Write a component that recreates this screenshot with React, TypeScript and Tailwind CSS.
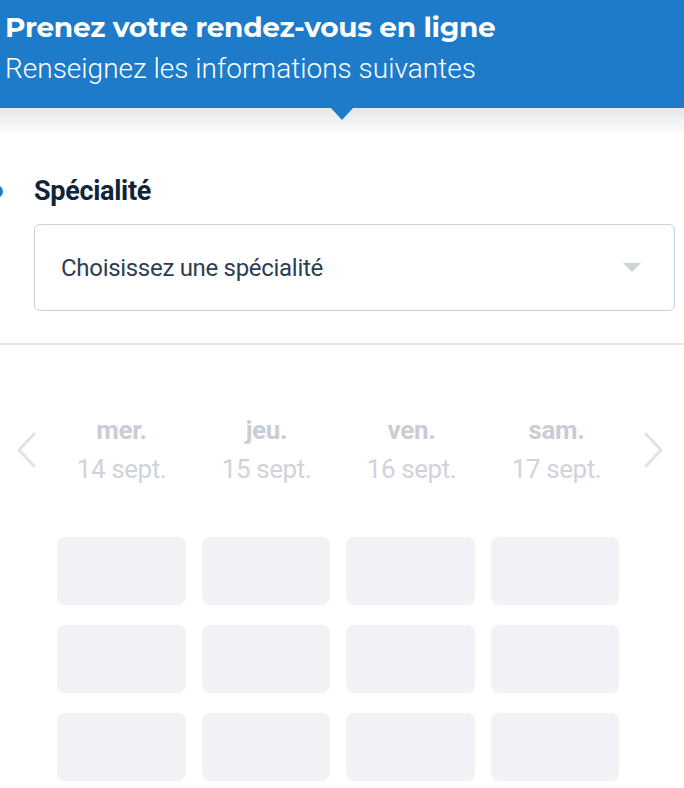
const days = [
  { day: "mer.", date: "14 sept." },
  { day: "jeu.", date: "15 sept." },
  { day: "ven.", date: "16 sept." },
  { day: "sam.", date: "17 sept." },
]

const App = () => {
  return (
    <div className="w-[684px] h-[788px] overflow-hidden bg-white font-['Roboto',sans-serif]">
      {/* bandeau */}
      <div className="relative h-[108px] bg-[#1e7bc9] pl-[5px] pt-[11px] text-white">
        <h1 className="font-['Montserrat','Open_Sans',sans-serif] text-[28px] font-bold leading-[32px] tracking-[-0.3px]">
          Prenez votre rendez-vous en ligne
        </h1>
        <p className="mt-[10px] text-[28px] font-light leading-[32px]">Renseignez les informations suivantes</p>
        <div className="absolute left-[330px] top-[107px] z-10 h-0 w-0 border-x-[12px] border-t-[13px] border-x-transparent border-t-[#1e7bc9]" />
      </div>
      <div className="h-[28px] bg-gradient-to-b from-[#e4e7ea] to-white" />

      {/* spécialité */}
      <div className="relative pl-[34px] pr-[9px] pt-[40px]">
        <div className="absolute left-[-10px] top-[49px] h-[13px] w-[13px] rounded-full bg-[#1e7bc9]" />
        <div className="text-[27px] font-bold leading-[30px] tracking-[-0.3px] text-[#10243a]">Spécialité</div>
        <div className="mt-[18px] flex h-[87px] items-center justify-between rounded-[6px] border border-[#c9d1db] pl-[26px] pr-[33px]">
          <span className="text-[24px] leading-[28px] tracking-[-0.3px] text-[#2d3e52]">Choisissez une spécialité</span>
          <div className="h-0 w-0 border-x-[9px] border-t-[9px] border-x-transparent border-t-[#cdd3da]" />
        </div>
      </div>

      <div className="mt-[32px] h-[2px] bg-[#e1e5ea]" />

      {/* calendrier */}
      <div className="mt-[70px] flex items-center pl-[15px]">
        <svg width="22" height="36" viewBox="0 0 22 36" fill="none">
          <path d="M19 2 L4 18 L19 34" stroke="#dde2e8" strokeWidth="3" strokeLinecap="round" strokeLinejoin="round" />
        </svg>
        <div className="ml-[20px] flex gap-[16px]">
          {days.map((d) => (
            <div key={d.day} className="w-[129px] text-center">
              <div className="text-[26px] font-bold leading-[30px] tracking-[-0.3px] text-[#c9ced6]">{d.day}</div>
              <div className="mt-[8px] text-[26px] font-normal leading-[32px] tracking-[-0.4px] text-[#d0d4da]">{d.date}</div>
            </div>
          ))}
        </div>
        <svg className="ml-[22px]" width="22" height="36" viewBox="0 0 22 36" fill="none">
          <path d="M3 2 L18 18 L3 34" stroke="#dde2e8" strokeWidth="3" strokeLinecap="round" strokeLinejoin="round" />
        </svg>
      </div>

      <div className="ml-[57px] mt-[52px] grid w-[562px] grid-cols-4 gap-x-[16px] gap-y-[20px]">
        {[...Array(12)].map((_, i) => (
          <div key={i} className="h-[68px] rounded-[8px] bg-[#f0f2f6]" />
        ))}
      </div>
    </div>
  )
}

export default App
